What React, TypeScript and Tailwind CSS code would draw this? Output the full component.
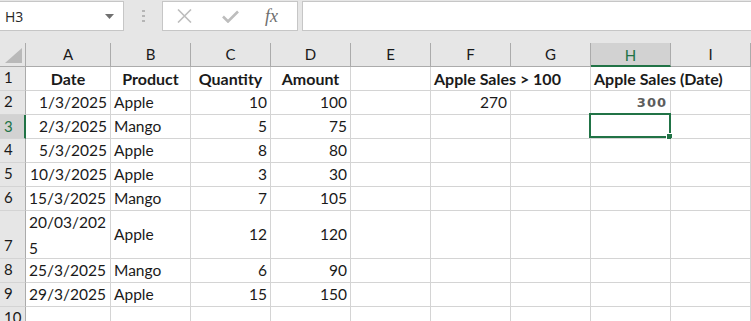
import React from 'react';

type Align = 'left' | 'right' | 'center';

interface CellSpec {
  text?: string;
  align?: Align;
  bold?: boolean;
  noRight?: boolean;
  lines?: string[];
  special?: 'gray';
  selected?: boolean;
}

const columns = ['A', 'B', 'C', 'D', 'E', 'F', 'G', 'H', 'I'];

const rows: { n: number; tall?: boolean; cells: CellSpec[] }[] = [
  {
    n: 1,
    cells: [
      { text: 'Date', align: 'center', bold: true },
      { text: 'Product', align: 'center', bold: true },
      { text: 'Quantity', align: 'center', bold: true },
      { text: 'Amount', align: 'center', bold: true },
      {},
      { text: 'Apple Sales > 100', align: 'left', bold: true, noRight: true },
      {},
      { text: 'Apple Sales (Date)', align: 'left', bold: true, noRight: true },
      {}
    ]
  },
  {
    n: 2,
    cells: [
      { text: '1/3/2025', align: 'right' },
      { text: 'Apple' },
      { text: '10', align: 'right' },
      { text: '100', align: 'right' },
      {},
      { text: '270', align: 'right' },
      {},
      { text: '300', align: 'right', special: 'gray' },
      {}
    ]
  },
  {
    n: 3,
    cells: [
      { text: '2/3/2025', align: 'right' },
      { text: 'Mango' },
      { text: '5', align: 'right' },
      { text: '75', align: 'right' },
      {},
      {},
      {},
      { selected: true },
      {}
    ]
  },
  {
    n: 4,
    cells: [
      { text: '5/3/2025', align: 'right' },
      { text: 'Apple' },
      { text: '8', align: 'right' },
      { text: '80', align: 'right' },
      {}, {}, {}, {}, {}
    ]
  },
  {
    n: 5,
    cells: [
      { text: '10/3/2025', align: 'right' },
      { text: 'Apple' },
      { text: '3', align: 'right' },
      { text: '30', align: 'right' },
      {}, {}, {}, {}, {}
    ]
  },
  {
    n: 6,
    cells: [
      { text: '15/3/2025' },
      { text: 'Mango' },
      { text: '7', align: 'right' },
      { text: '105', align: 'right' },
      {}, {}, {}, {}, {}
    ]
  },
  {
    n: 7,
    tall: true,
    cells: [
      { lines: ['20/03/202', '5'] },
      { text: 'Apple' },
      { text: '12', align: 'right' },
      { text: '120', align: 'right' },
      {}, {}, {}, {}, {}
    ]
  },
  {
    n: 8,
    cells: [
      { text: '25/3/2025' },
      { text: 'Mango' },
      { text: '6', align: 'right' },
      { text: '90', align: 'right' },
      {}, {}, {}, {}, {}
    ]
  },
  {
    n: 9,
    cells: [
      { text: '29/3/2025' },
      { text: 'Apple' },
      { text: '15', align: 'right' },
      { text: '150', align: 'right' },
      {}, {}, {}, {}, {}
    ]
  },
  { n: 10, cells: [{}, {}, {}, {}, {}, {}, {}, {}, {}] }
];

function Cell({ spec, tall }: { spec: CellSpec; tall?: boolean }) {
  const justify =
    spec.align === 'right' ? 'justify-end' : spec.align === 'center' ? 'justify-center' : 'justify-start';

  return (
    <div
      className={`relative flex items-center whitespace-nowrap border-b border-[#d4d4d4] px-[3px] ${justify} ${
        spec.noRight ? '' : 'border-r'
      } ${tall ? 'h-[48px]' : 'h-[24px]'} ${spec.bold ? 'text-[16px] font-bold' : 'text-[15.5px]'}`}
    >
      {spec.lines ? (
        <div className="flex flex-col leading-[26px]">
          {spec.lines.map((l) => (
            <span key={l}>{l}</span>
          ))}
        </div>
      ) : spec.special === 'gray' ? (
        <span className="font-['DejaVu_Sans',sans-serif] text-[13px] font-semibold tracking-[1px] text-[#5d5d5d]">
          {spec.text}
        </span>
      ) : (
        <span>{spec.text}</span>
      )}
      {spec.selected && (
        <div className="absolute -left-[2px] -top-[2px] -right-[1px] bottom-0 border-2 border-[#217346]">
          <div className="absolute -right-[3px] -bottom-[3px] h-[5px] w-[5px] bg-[#217346] outline outline-1 outline-white" />
        </div>
      )}
    </div>
  );
}

export default function App() {
  return (
    <div className="h-[321px] w-[751px] overflow-hidden bg-white font-['Lato',sans-serif] text-[15px] text-[#1a1a1a]">
      {/* formula bar */}
      <div className="flex h-[43px] items-start bg-[#e6e6e6] pt-[1px]">
        <div className="-ml-[1px] flex h-[30px] w-[125px] items-center justify-between border border-[#c6c6c6] bg-white pl-[5px] pr-[9px] font-['Open_Sans',sans-serif] text-[14px] text-[#262626]">
          <span>H3</span>
          <svg width="9" height="5" viewBox="0 0 9 5">
            <path d="M0 0h9L4.5 5z" fill="#707070" />
          </svg>
        </div>
        <div className="flex h-[30px] w-[38px] flex-col items-center justify-center gap-[3px]">
          <span className="h-[2px] w-[3px] bg-[#b5b5b5]" />
          <span className="h-[2px] w-[3px] bg-[#b5b5b5]" />
          <span className="h-[2px] w-[3px] bg-[#b5b5b5]" />
        </div>
        <div className="flex h-[30px] w-[136px] items-center border border-[#c6c6c6] bg-white">
          <svg className="ml-[14px]" width="15" height="14" viewBox="0 0 15 14">
            <path d="M1 0.5L14 13.5M14 0.5L1 13.5" stroke="#bdbdbd" strokeWidth="1.6" />
          </svg>
          <svg className="ml-[30px]" width="17" height="13" viewBox="0 0 17 13">
            <path d="M1 6.5L6 11.5L16 1.5" stroke="#bdbdbd" strokeWidth="2.6" fill="none" />
          </svg>
          <span className="ml-[26px] font-['Liberation_Serif',serif] text-[18px] italic text-[#6e6e6e]">fx</span>
        </div>
        <div className="ml-[4px] h-[30px] flex-1 border border-r-0 border-[#c6c6c6] bg-white" />
      </div>

      {/* sheet */}
      <div className="grid grid-cols-[26px_85px_80px_80px_80px_80px_80px_80px_80px_80px] bg-white">
        {/* column headers */}
        <div className="relative h-[24px] border-b border-r border-[#ababab] bg-[#e6e6e6]">
          <svg className="absolute left-[5px] top-[5px]" width="17" height="15" viewBox="0 0 17 15">
            <path d="M17 0V15H0z" fill="#b9b9b9" />
          </svg>
        </div>
        {columns.map((c) =>
          c === 'H' ? (
            <div
              key={c}
              className="flex h-[24px] items-center justify-center border-b-2 border-r border-b-[#217346] border-r-[#ababab] bg-[#d2d2d2] pt-[2px] text-[#217346]"
            >
              {c}
            </div>
          ) : (
            <div
              key={c}
              className="flex h-[24px] items-center justify-center border-b border-r border-[#ababab] bg-[#e6e6e6] text-[#1a1a1a]"
            >
              {c}
            </div>
          )
        )}

        {rows.map((row) => (
          <React.Fragment key={row.n}>
            {row.n === 3 ? (
              <div className="flex h-[24px] items-center border-b border-r-2 border-b-[#d4d4d4] border-r-[#217346] bg-[#d2d2d2] pl-[4px] text-[#217346]">
                {row.n}
              </div>
            ) : (
              <div
                className={`flex items-end border-b border-r border-b-[#d4d4d4] border-r-[#ababab] bg-[#e6e6e6] pb-[2px] pl-[4px] ${
                  row.tall ? 'h-[48px]' : 'h-[24px] items-center pb-0'
                }`}
              >
                {row.n}
              </div>
            )}
            {row.cells.map((cell, i) => (
              <Cell key={i} spec={cell} tall={row.tall} />
            ))}
          </React.Fragment>
        ))}
      </div>
    </div>
  );
}
